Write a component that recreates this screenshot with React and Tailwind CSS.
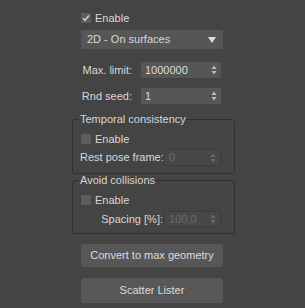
import React from 'react';

const Check = ({ checked }) => (
  <span className="w-[10px] h-[10px] bg-[#5c5c5c] flex items-center justify-center shrink-0">
    {checked && (
      <svg width="8" height="8" viewBox="0 0 8 8">
        <path d="M1 4.2 L3 6.3 L7 1.5" stroke="#cfcfcf" strokeWidth="1.5" fill="none" />
      </svg>
    )}
  </span>
);

const Arrows = ({ dim }) => (
  <svg width="6" height="10" viewBox="0 0 6 10" className="shrink-0">
    <path d="M3 0.5 L5.5 4 L0.5 4 Z" fill={dim ? '#6a6a6a' : '#bdbdbd'} />
    <path d="M3 9.5 L5.5 6 L0.5 6 Z" fill={dim ? '#6a6a6a' : '#bdbdbd'} />
  </svg>
);

const Spinner = ({ value, width, disabled, height }) => (
  <div
    className={`flex items-center justify-between pl-[4px] pr-[4px] shrink-0 ${width} ${height} ${
      disabled ? 'bg-[#484848] border border-[#3c3c3c] text-[#6a6a6a]' : 'bg-[#565656] text-[#dcdcdc]'
    }`}
  >
    <span>{value}</span>
    <Arrows dim={disabled} />
  </div>
);

const Group = ({ title, children, className }) => (
  <fieldset className={`border border-[#2f2f2f] rounded-[3px] ml-[72px] w-[163px] px-[8px] ${className}`}>
    <legend className="ml-[-2px] px-[1px] text-[#d6d6d6] leading-[13px] h-[13px]">{title}</legend>
    {children}
  </fieldset>
);

export default function App() {
  return (
    <div
      className="w-[305px] h-[308px] bg-[#444444] text-[#d8d8d8] text-[11px] leading-[13px] whitespace-nowrap overflow-hidden"
      style={{ fontFamily: '"Liberation Sans", Arial, sans-serif' }}
    >
      {/* Enable */}
      <div className="flex items-center gap-[4px] ml-[81px] pt-[13px] h-[23px]">
        <Check checked />
        <span>Enable</span>
      </div>

      {/* Mode dropdown */}
      <div className="ml-[81px] mt-[7px] w-[142px] h-[19px] bg-[#565656] flex items-center justify-between pl-[6px] pr-[7px]">
        <span>2D - On surfaces</span>
        <svg width="8" height="6" viewBox="0 0 8 6">
          <path d="M0 0 L8 0 L4 6 Z" fill="#dcdcdc" />
        </svg>
      </div>

      {/* Max limit / seed */}
      <div className="flex items-center mt-[13px] ml-[72px] h-[16px]">
        <span className="w-[61px] text-right pr-[1px]">Max. limit:</span>
        <span className="w-[8px]" />
        <Spinner value="1000000" width="w-[80px]" height="h-[16px]" />
      </div>
      <div className="flex items-center mt-[10px] ml-[72px] h-[16px]">
        <span className="w-[61px] text-right pr-[1px]">Rnd seed:</span>
        <span className="w-[8px]" />
        <Spinner value="1" width="w-[80px]" height="h-[16px]" />
      </div>

      <Group title="Temporal consistency" className="mt-[9px] h-[61px]">
        <div className="flex items-center gap-[4px] mt-[8px] h-[10px]">
          <Check />
          <span>Enable</span>
        </div>
        <div className="flex items-center mt-[5px] h-[17px]">
          <span className="w-[84px] ml-[-1px]">Rest pose frame:</span>
          <Spinner value="0" width="w-[57px]" height="h-[17px]" disabled />
        </div>
      </Group>

      <Group title="Avoid collisions" className="h-[60px]">
        <div className="flex items-center gap-[4px] mt-[8px] h-[10px]">
          <Check />
          <span>Enable</span>
        </div>
        <div className="flex items-center mt-[6px] h-[16px]">
          <span className="w-[83px] text-right pr-[1px]">Spacing [%]:</span>
          <Spinner value="100,0" width="w-[57px]" height="h-[16px]" disabled />
        </div>
      </Group>

      <button className="block ml-[81px] mt-[10px] w-[142px] h-[23px] rounded-[3px] bg-[#575757] text-[#dcdcdc]">
        Convert to max geometry
      </button>
      <button className="block ml-[81px] mt-[11px] w-[142px] h-[25px] rounded-[3px] bg-[#575757] text-[#dcdcdc]">
        Scatter Lister
      </button>
    </div>
  );
}
